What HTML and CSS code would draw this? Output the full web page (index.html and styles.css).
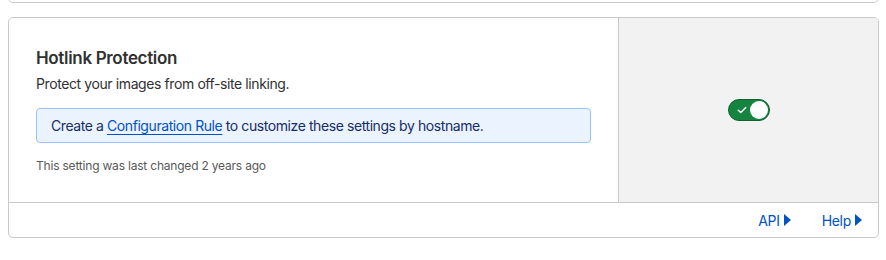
FILE: index.html
```html
<!DOCTYPE html>
<html lang="en">
<head>
  <meta charset="UTF-8" />
  <meta name="viewport" content="width=device-width, initial-scale=1.0"/>
  <title>Hotlink Protection</title>
  <link rel="stylesheet" href="styles.css">
</head>
<body>

  <div class="page">
    <!-- previous setting card, mostly scrolled off -->
    <div class="card card-prev"></div>

    <div class="card">
      <div class="setting">
        <div class="setting-main">
          <h3>Hotlink Protection</h3>
          <p class="desc">Protect your images from off-site linking.</p>
          <div class="notice">
            Create a <a href="#">Configuration Rule</a> to customize these settings by hostname.
          </div>
          <p class="changed">This setting was last changed 2 years ago</p>
        </div>
        <div class="setting-control">
          <button class="toggle" aria-pressed="true" aria-label="Hotlink Protection">
            <svg class="check" width="10" height="8" viewBox="0 0 10 8">
              <path d="M1.2 4.2 L3.8 6.6 L8.8 1.4" fill="none" stroke="#fff" stroke-width="1.4" stroke-linecap="round" stroke-linejoin="round"/>
            </svg>
            <span class="knob"></span>
          </button>
        </div>
      </div>
      <div class="card-footer">
        <a href="#">API<span class="caret"></span></a>
        <a href="#">Help<span class="caret"></span></a>
      </div>
    </div>
  </div>

</body>
</html>
```

FILE: styles.css
```css
:root {
  --text-color: #313131;
  --muted-color: #595959;
  --border-color: #c9c9c9;
  --link-color: #0051c3;
  --panel-bg: #f2f2f2;
}

body {
  margin: 0;
  font-family: Inter, "Noto Sans", sans-serif;
  color: var(--text-color);
  background: #ffffff;
}

.page {
  padding: 0 7px 0 8px;
}

.card {
  border: 1px solid var(--border-color);
  border-radius: 5px;
  background: #ffffff;
  overflow: hidden;
}

.card-prev {
  height: 30px;
  margin-top: -29px;
  margin-bottom: 14px;
}

.setting {
  display: grid;
  grid-template-columns: 1fr 259px;
  height: 184px;
}

.setting-main {
  padding: 28px 27px 0 27px;
  border-right: 1px solid var(--border-color);
}

.setting-main h3 {
  margin: 0;
  font-size: 17px;
  line-height: 24px;
  font-weight: 600;
  letter-spacing: -0.33px;
}

.desc {
  margin: 4px 0 0;
  font-size: 14px;
  line-height: 20px;
  letter-spacing: -0.4px;
}

.notice {
  margin-top: 14px;
  padding: 7px 14px 6px;
  border: 1px solid #9cc2fb;
  border-radius: 4px;
  background: #ebf3ff;
  color: #152d66;
  font-size: 14px;
  line-height: 20px;
  letter-spacing: -0.42px;
}

.notice a {
  color: var(--link-color);
  text-decoration: underline;
  text-underline-offset: 3px;
}

.changed {
  margin: 15px 0 0;
  font-size: 12px;
  line-height: 16px;
  color: var(--muted-color);
  letter-spacing: -0.2px;
}

.setting-control {
  background: var(--panel-bg);
  display: flex;
  align-items: center;
  justify-content: center;
}

.toggle {
  position: relative;
  width: 42px;
  height: 22px;
  padding: 0;
  border: 1px solid #0d6332;
  border-radius: 11px;
  background: #16843f;
  display: flex;
  align-items: center;
  cursor: pointer;
}

.check {
  margin-left: 8px;
}

.knob {
  position: absolute;
  top: 1px;
  right: 1px;
  width: 18px;
  height: 18px;
  border-radius: 50%;
  background: #ffffff;
}

.card-footer {
  border-top: 1px solid var(--border-color);
  height: 34px;
  display: flex;
  justify-content: flex-end;
  align-items: center;
  gap: 31px;
  padding-right: 16px;
}

.card-footer a {
  color: var(--link-color);
  text-decoration: none;
  font-size: 14px;
  letter-spacing: -0.3px;
  display: flex;
  align-items: center;
}

.caret {
  width: 0;
  height: 0;
  margin-left: 4px;
  border-top: 6px solid transparent;
  border-bottom: 6px solid transparent;
  border-left: 7px solid var(--link-color);
}
```
